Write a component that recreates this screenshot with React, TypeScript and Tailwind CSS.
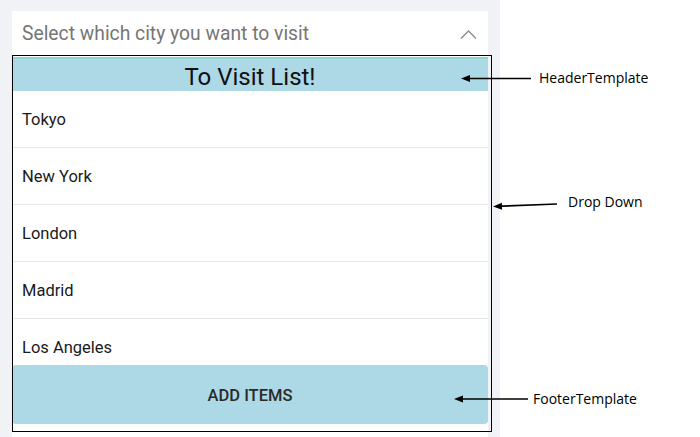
const cities = ["Tokyo", "New York", "London", "Madrid", "Los Angeles"];

const Arrow = ({ x1, y1, x2, y2 }: { x1: number; y1: number; x2: number; y2: number }) => {
    // arrow pointing at (x2, y2)
    const a = Math.atan2(y2 - y1, x2 - x1);
    const len = 9;
    const w = 3.5;
    const bx = x2 - len * Math.cos(a);
    const by = y2 - len * Math.sin(a);
    const px = -Math.sin(a) * w;
    const py = Math.cos(a) * w;
    return (
        <g>
            <line x1={x1} y1={y1} x2={bx} y2={by} stroke="#000" strokeWidth={1.6} />
            <polygon points={`${x2},${y2} ${bx + px},${by + py} ${bx - px},${by - py}`} fill="#000" />
        </g>
    );
};

export default function App() {
    return (
        <div className="relative flex h-[437px] w-[700px] overflow-hidden bg-white font-['Roboto',sans-serif]">
            <div className="h-full w-[500px] bg-[#f1f2f6] pl-[12px] pt-[11px]">
                <div className="flex w-[476px] flex-col bg-white pb-[20px]">
                    <div className="flex h-[46px] items-center justify-between pl-[10px] pr-[11px]">
                        <span className="text-[19.3px] text-[#767676]">Select which city you want to visit</span>
                        <svg width="17" height="11" viewBox="0 0 17 11" className="mt-[1px]">
                            <polyline points="1,9.5 8.5,2 16,9.5" fill="none" stroke="#8a8a8a" strokeWidth={1.3} />
                        </svg>
                    </div>
                    <div className="flex h-[34px] items-center justify-center border-t-2 border-[#8fd3d2] bg-[#add8e6] pt-[3px] text-[24px] text-[#111]">
                        To Visit List!
                    </div>
                    <div className="flex h-[274px] flex-col overflow-hidden">
                        {cities.map((c) => (
                            <div
                                key={c}
                                className="flex h-[57px] shrink-0 items-center border-b border-[#e8e8e8] pl-[10px] pt-[3px] text-[16.5px] text-[#1a1a1a]">
                                {c}
                            </div>
                        ))}
                    </div>
                    <div className="flex h-[59px] items-center justify-center rounded-[4px] bg-[#add8e6] pt-[3px] text-[16.5px] font-medium text-[#2a2a2a]">
                        ADD ITEMS
                    </div>
                </div>
            </div>

            {/* annotation frame and labels */}
            <div className="absolute left-[12px] top-[55px] h-[377px] w-[480px] border border-black" />
            <svg className="absolute left-0 top-0" width={700} height={437}>
                <Arrow x1={531} y1={78.5} x2={461} y2={78.5} />
                <Arrow x1={557} y1={204} x2={493} y2={206.5} />
                <Arrow x1={528} y1={399} x2={454} y2={399} />
            </svg>
            <span className="absolute left-[539px] top-[67px] font-['Open_Sans',sans-serif] text-[14px] text-black">HeaderTemplate</span>
            <span className="absolute left-[568px] top-[191px] font-['Open_Sans',sans-serif] text-[14px] text-black">Drop Down</span>
            <span className="absolute left-[533px] top-[388px] font-['Open_Sans',sans-serif] text-[14px] text-black">FooterTemplate</span>
        </div>
    );
}
